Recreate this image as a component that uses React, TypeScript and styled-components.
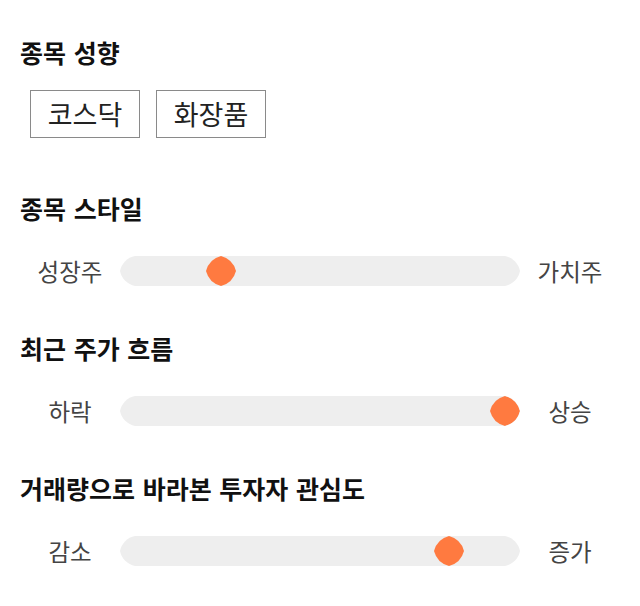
import React from 'react'
import styled, { createGlobalStyle } from 'styled-components'

const GlobalStyle = createGlobalStyle`
  html, body {
    margin: 0;
    padding: 0;
    background: #fff;
  }
  body {
    font-family: 'Noto Sans CJK KR', 'Noto Sans', sans-serif;
    color: #111;
  }
`

const Wrapper = styled.main`
  width: 640px;
  padding: 36px 20px 0;
  box-sizing: border-box;
`

const Section = styled.section`
  & + & {
    margin-top: 46px;
  }
`

const Title = styled.h2`
  margin: 0;
  font-size: 25px;
  line-height: 32px;
  font-weight: 700;
  word-spacing: 2px;
  color: #111;
`

const Tags = styled.div`
  display: flex;
  gap: 16px;
  padding: 22px 0 8px 10px;
`

const Tag = styled.button`
  width: 110px;
  height: 48px;
  padding: 0;
  border: 1px solid #8a8a8a;
  background: #fff;
  font-family: inherit;
  font-size: 27px;
  line-height: 46px;
  color: #222;
`

const Row = styled.div`
  display: grid;
  grid-template-columns: 100px 400px 100px;
  align-items: center;
  margin-top: 32px;
  height: 30px;
`

const Label = styled.span`
  text-align: center;
  font-size: 23.5px;
  line-height: 30px;
  color: #444;
`

const Track = styled.div`
  position: relative;
  height: 30px;
  background: #eee;
  clip-path: path('M15 0 H385 A19 19 0 0 1 400 15 A19 19 0 0 1 385 30 H15 A19 19 0 0 1 0 15 A19 19 0 0 1 15 0 Z');
`

const Thumb = styled.div`
  position: absolute;
  top: 0;
  width: 30px;
  height: 30px;
  background: #ff7a40;
  clip-path: path('M15 0 A21 21 0 0 1 30 15 A21 21 0 0 1 15 30 A21 21 0 0 1 0 15 A21 21 0 0 1 15 0 Z');
`

interface SliderProps {
  left: string
  right: string
  value: number
}

const Slider = ({ left, right, value }: SliderProps) => (
  <Row>
    <Label>{left}</Label>
    <Track>
      <Thumb style={{ left: `${Math.round(value * 370)}px` }} />
    </Track>
    <Label>{right}</Label>
  </Row>
)

export default function App() {
  return (
    <>
      <GlobalStyle />
      <Wrapper>
        <Section>
          <Title>종목 성향</Title>
          <Tags>
            <Tag>코스닥</Tag>
            <Tag>화장품</Tag>
          </Tags>
        </Section>
        <Section>
          <Title>종목 스타일</Title>
          <Slider left='성장주' right='가치주' value={0.232} />
        </Section>
        <Section>
          <Title>최근 주가 흐름</Title>
          <Slider left='하락' right='상승' value={1} />
        </Section>
        <Section>
          <Title>거래량으로 바라본 투자자 관심도</Title>
          <Slider left='감소' right='증가' value={0.849} />
        </Section>
      </Wrapper>
    </>
  )
}
